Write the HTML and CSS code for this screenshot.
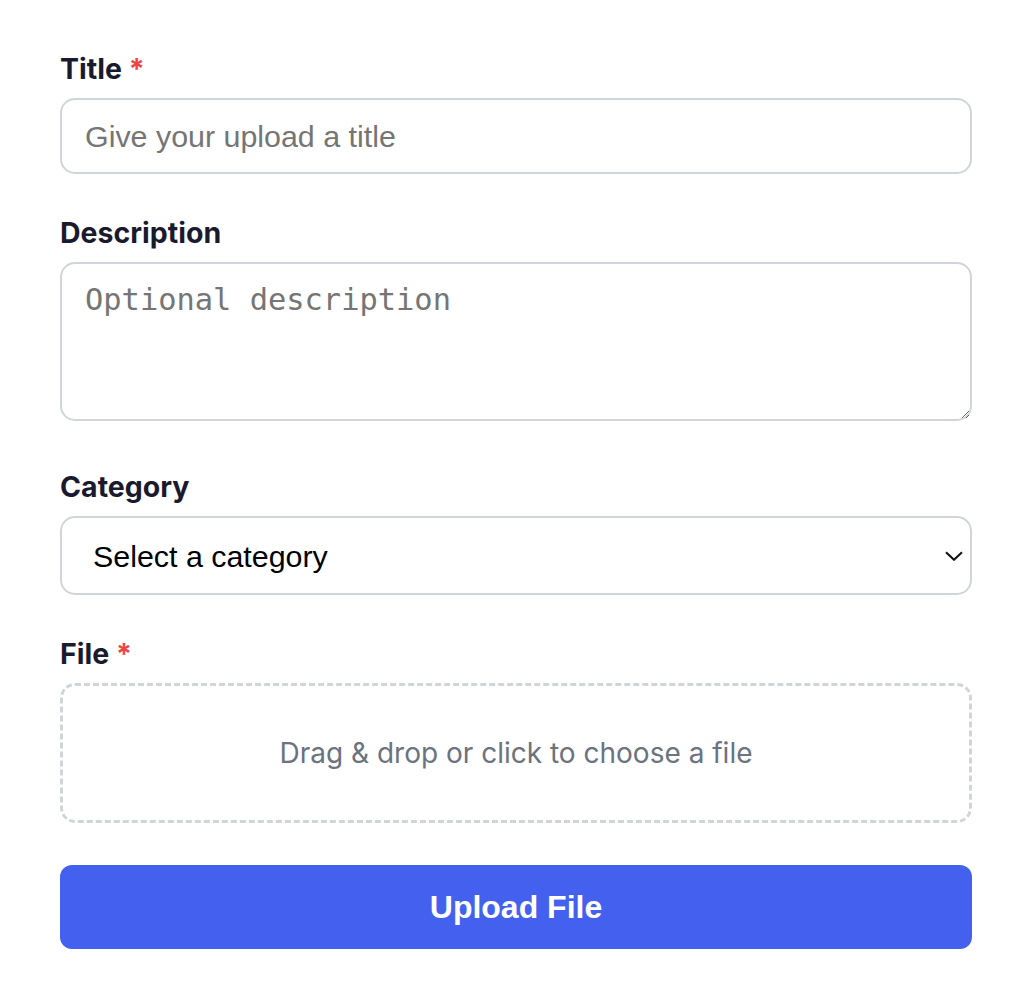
FILE: index.html
```html
<!DOCTYPE html>
<html lang="en">
<head>
<meta charset="utf-8">
<title>Upload</title>
<link rel="stylesheet" href="styles.css">
</head>
<body>
<form class="upload-form">
  <div class="field">
    <label class="label" for="title">Title <span class="req">*</span></label>
    <input class="input" id="title" type="text" placeholder="Give your upload a title">
  </div>
  <div class="field field-desc">
    <label class="label" for="desc">Description</label>
    <textarea class="textarea" id="desc" placeholder="Optional description"></textarea>
  </div>
  <div class="field">
    <label class="label" for="cat">Category</label>
    <div class="select-wrap">
      <select class="select" id="cat">
        <option>Select a category</option>
      </select>
      <svg class="chevron" width="18" height="10" viewBox="0 0 18 10" aria-hidden="true"><path d="M1 1.2 L9 8.8 L17 1.2" fill="none" stroke="#111" stroke-width="2"/></svg>
    </div>
  </div>
  <div class="field">
    <label class="label">File <span class="req">*</span></label>
    <div class="dropzone">Drag &amp; drop or click to choose a file</div>
  </div>
  <button class="btn" type="button">Upload File</button>
</form>
</body>
</html>
```
FILE: styles.css
```css
html, body {
  margin: 0;
  padding: 0;
  background: #ffffff;
}
body {
  font-family: Inter, "Noto Sans", sans-serif;
}
.upload-form {
  width: 912px;
  margin: 0 0 0 60px;
  padding-top: 52px;
  display: flex;
  flex-direction: column;
}
.field {
  display: flex;
  flex-direction: column;
  margin-bottom: 42px;
}
.field-desc {
  margin-bottom: 49px;
}
.label {
  font-family: Inter, sans-serif;
  font-size: 28.5px;
  font-weight: 700;
  line-height: 34px;
  color: #1a1a2e;
  margin-bottom: 12px;
}
.req {
  color: #ef4444;
}
.input,
.textarea,
.select {
  box-sizing: border-box;
  width: 100%;
  border: 2px solid #d1d5db;
  border-radius: 15px;
  background: #fff;
  outline: none;
  margin: 0;
}
.input {
  height: 76px;
  padding: 0 23px;
  font-family: "Liberation Sans", Arial, sans-serif;
  font-size: 30.4px;
  color: #111;
}
.input::placeholder {
  color: #757575;
}
.textarea {
  display: block;
  height: 159px;
  padding: 18px 23px;
  font-family: "DejaVu Sans Mono", monospace;
  font-size: 30.4px;
  color: #111;
  resize: vertical;
}
.textarea::placeholder {
  color: #757575;
}
.select-wrap {
  position: relative;
}
.select {
  display: block;
  height: 79px;
  padding: 0 40px 0 31px;
  font-family: "Liberation Sans", Arial, sans-serif;
  font-size: 30.4px;
  color: #000;
  -webkit-appearance: none;
  appearance: none;
}
.chevron {
  position: absolute;
  right: 9px;
  top: 35px;
}
.dropzone {
  box-sizing: border-box;
  height: 140px;
  border: 3px dashed #d1d5db;
  border-radius: 15px;
  display: flex;
  align-items: center;
  justify-content: center;
  font-family: Inter, sans-serif;
  font-size: 28px;
  color: #6b7280;
}
.btn {
  height: 84px;
  border: none;
  border-radius: 12px;
  background: #4361ee;
  color: #fff;
  font-family: "Liberation Sans", Arial, sans-serif;
  font-size: 32px;
  font-weight: 700;
  cursor: pointer;
}
```
